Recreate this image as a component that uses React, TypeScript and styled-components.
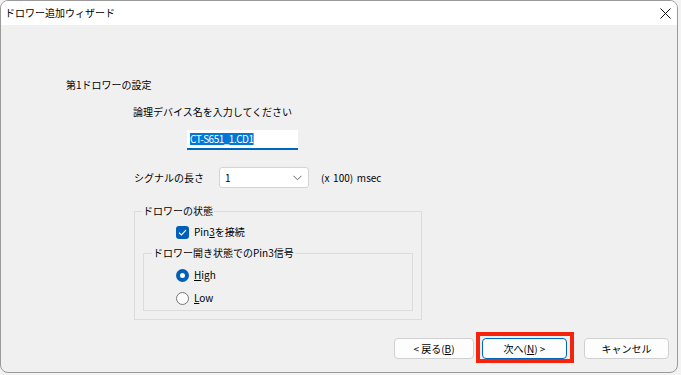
import React from 'react'
import styled, { createGlobalStyle } from 'styled-components'

const GlobalStyle = createGlobalStyle`
  html, body {
    margin: 0;
    padding: 0;
    background: #f3f3f3;
  }
  body {
    font-family: 'Noto Sans CJK JP', 'Noto Sans', sans-serif;
    font-size: 10px;
    color: #000;
  }
`

const Window = styled.div`
  box-sizing: border-box;
  width: 678px;
  height: 373px;
  border: 1px solid #9a9a9a;
  border-radius: 8px;
  overflow: hidden;
  display: flex;
  flex-direction: column;
  background: #f0f0f0;
`

const TitleBar = styled.div`
  height: 24px;
  background: #fff;
  display: flex;
  align-items: center;
  justify-content: space-between;
  padding: 0 6px 0 4px;
`

const Title = styled.span`
  line-height: 14px;
`

const CloseButton = styled.svg`
  width: 11px;
  height: 11px;
`

const Body = styled.div`
  flex: 1;
  display: flex;
  flex-direction: column;
  align-items: flex-start;
  padding: 53px 8px 13px 65px;
`

const Text = styled.div<{ $ml?: number; $mt?: number }>`
  line-height: 14px;
  margin-left: ${p => p.$ml ?? 0}px;
  margin-top: ${p => p.$mt ?? 0}px;
  white-space: nowrap;
`

const TextBox = styled.div`
  box-sizing: border-box;
  margin: 11px 0 0 121px;
  width: 111px;
  height: 20px;
  background: #fff;
  border-bottom: 2px solid #0067c0;
  display: flex;
  align-items: center;
  padding-left: 3px;
`

const Selected = styled.span`
  background: #0078d7;
  color: #fff;
  line-height: 12px;
  letter-spacing: -0.5px;
  border-right: 1px solid #f08a24;
`

const SignalRow = styled.div`
  display: flex;
  align-items: center;
  margin: 17px 0 0 68px;
  height: 21px;
`

const SignalLabel = styled.span`
  width: 85px;
`

const Combo = styled.div`
  box-sizing: border-box;
  width: 90px;
  height: 21px;
  background: #fff;
  border: 1px solid #d4d4d4;
  border-radius: 3px;
  display: flex;
  align-items: center;
  justify-content: space-between;
  padding: 0 6px 0 5px;
`

const Unit = styled.span`
  margin-left: 12px;
  word-spacing: 1.5px;
`

const Group = styled.fieldset<{ $inner?: boolean }>`
  box-sizing: border-box;
  margin: ${p => (p.$inner ? '6px 0 0 0' : '15px 0 0 68px')};
  width: ${p => (p.$inner ? 'auto' : '288px')};
  border: 1px solid #dcdcdc;
  padding: ${p => (p.$inner ? '7px 0 5px 32px' : '6px 8px 8px 8px')};
  display: flex;
  flex-direction: column;
  gap: ${p => (p.$inner ? '9px' : '0')};
`

const Legend = styled.legend<{ $inner?: boolean }>`
  padding: 0 1px;
  margin-left: ${p => (p.$inner ? '-24px' : '-1px')};
  line-height: 16px;
`

const OptionRow = styled.label<{ $ml?: number }>`
  display: flex;
  align-items: center;
  gap: 5px;
  height: 14px;
  margin-left: ${p => p.$ml ?? 0}px;
  line-height: 14px;
`

const CheckBox = styled.span`
  width: 13px;
  height: 13px;
  border-radius: 3px;
  background: #005fb8;
  display: inline-flex;
  align-items: center;
  justify-content: center;
`

const Radio = styled.span<{ $checked?: boolean }>`
  box-sizing: border-box;
  width: 13px;
  height: 13px;
  border-radius: 50%;
  background: ${p => (p.$checked ? '#005fb8' : '#fdfdfd')};
  border: ${p => (p.$checked ? 'none' : '1px solid #777')};
  display: inline-flex;
  align-items: center;
  justify-content: center;

  &::after {
    content: '';
    display: ${p => (p.$checked ? 'block' : 'none')};
    width: 5px;
    height: 5px;
    border-radius: 50%;
    background: #fff;
  }
`

const U = styled.span`
  text-decoration: underline;
  text-underline-offset: 1px;
`

const ButtonRow = styled.div`
  margin-top: auto;
  align-self: flex-end;
  display: flex;
  align-items: center;
`

const Button = styled.div<{ $w: number; $focused?: boolean }>`
  box-sizing: border-box;
  width: ${p => p.$w}px;
  height: 21px;
  background: #fdfdfd;
  border: 1px solid ${p => (p.$focused ? '#0067c0' : '#d0d0d0')};
  border-radius: 4px;
  display: flex;
  align-items: center;
  justify-content: center;
  line-height: 14px;
`

const HighlightWrap = styled.div`
  position: relative;
  margin: 0 17px 0 8px;
`

const Highlight = styled.div`
  position: absolute;
  left: -6px;
  right: -7px;
  top: -6px;
  bottom: -4px;
  border: 4px solid #f5230c;
`

export default function App() {
  return (
    <>
      <GlobalStyle />
      <Window>
        <TitleBar>
          <Title>ドロワー追加ウィザード</Title>
          <CloseButton viewBox="0 0 11 11">
            <path d="M0.5 0.5 L10.5 10.5 M10.5 0.5 L0.5 10.5" stroke="#111" strokeWidth="1" />
          </CloseButton>
        </TitleBar>
        <Body>
          <Text>第1ドロワーの設定</Text>
          <Text $ml={67} $mt={13}>
            論理デバイス名を入力してください
          </Text>
          <TextBox>
            <Selected>CT-S651_1.CD1</Selected>
          </TextBox>
          <SignalRow>
            <SignalLabel>シグナルの長さ</SignalLabel>
            <Combo>
              <span>1</span>
              <svg width="9" height="6" viewBox="0 0 9 6">
                <path d="M0.5 0.8 L4.5 4.8 L8.5 0.8" stroke="#666" fill="none" strokeWidth="1" />
              </svg>
            </Combo>
            <Unit>(x 100) msec</Unit>
          </SignalRow>
          <Group>
            <Legend>ドロワーの状態</Legend>
            <OptionRow $ml={33}>
              <CheckBox>
                <svg width="9" height="7" viewBox="0 0 9 7">
                  <path d="M1 3.6 L3.4 6 L8 1.2" stroke="#fff" fill="none" strokeWidth="1.2" />
                </svg>
              </CheckBox>
              <span>
                Pin<U>3</U>を接続
              </span>
            </OptionRow>
            <Group $inner>
              <Legend $inner>ドロワー開き状態でのPin3信号</Legend>
              <OptionRow>
                <Radio $checked />
                <span>
                  <U>H</U>igh
                </span>
              </OptionRow>
              <OptionRow>
                <Radio />
                <span>
                  <U>L</U>ow
                </span>
              </OptionRow>
            </Group>
          </Group>
          <ButtonRow>
            <Button $w={80}>
              &lt; 戻る(<U>B</U>)
            </Button>
            <HighlightWrap>
              <Button $w={85} $focused>
                次へ(<U>N</U>) &gt;
              </Button>
              <Highlight />
            </HighlightWrap>
            <Button $w={85}>キャンセル</Button>
          </ButtonRow>
        </Body>
      </Window>
    </>
  )
}
